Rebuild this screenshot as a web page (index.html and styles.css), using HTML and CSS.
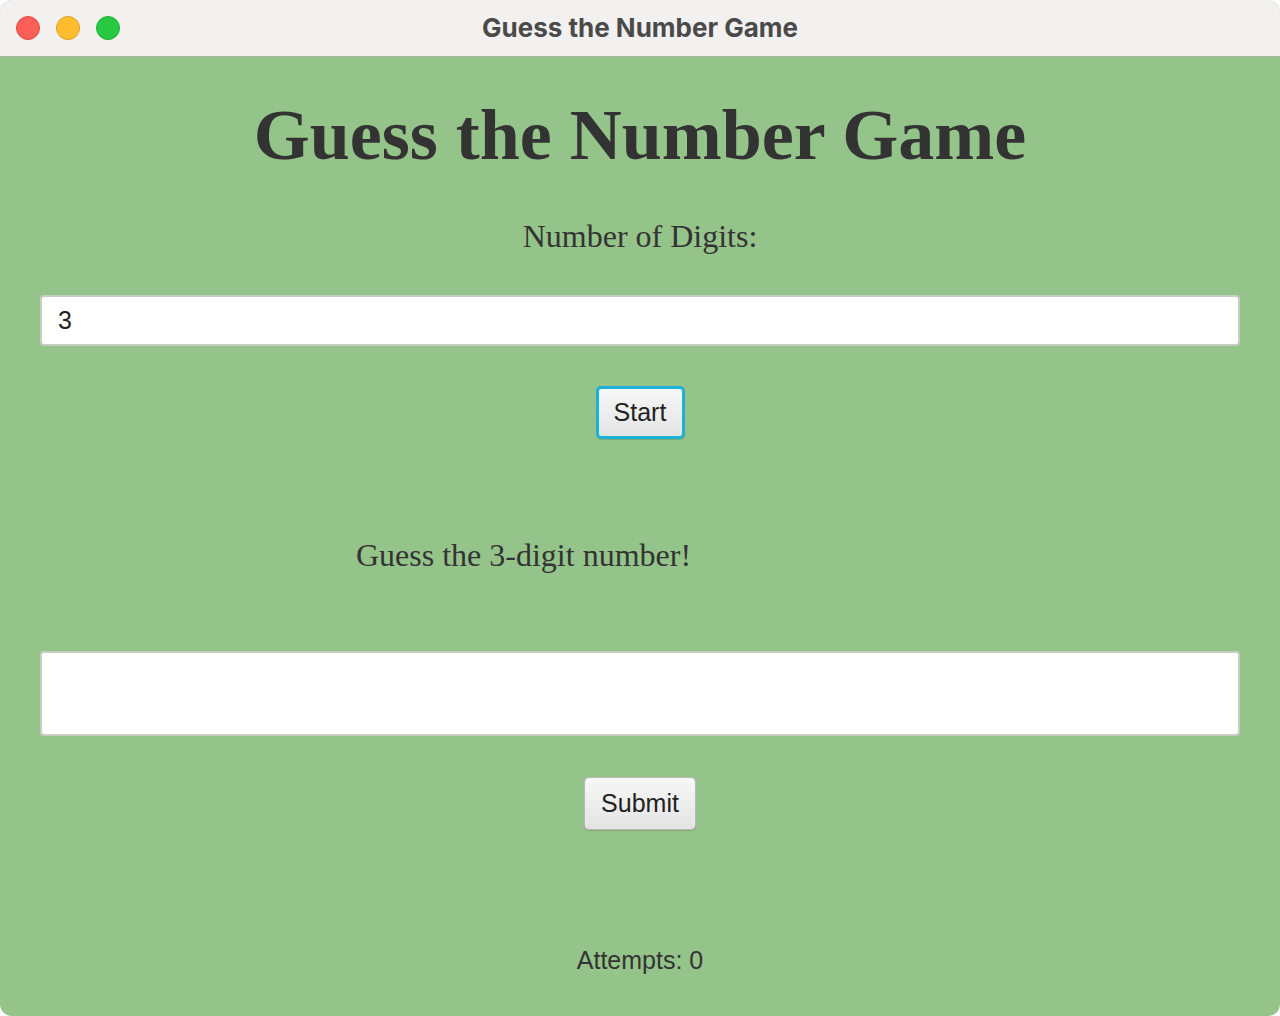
FILE: index.html
```html
<!DOCTYPE html>
<html>
<head>
<meta charset="utf-8">
<link rel="stylesheet" href="styles.css">
</head>
<body>
<div class="window">
  <div class="titlebar">
    <div class="lights">
      <span class="light red"></span>
      <span class="light yellow"></span>
      <span class="light green"></span>
    </div>
    <div class="wtitle">Guess the Number Game</div>
  </div>
  <div class="content">
    <h1 class="heading">Guess the Number Game</h1>
    <div class="label digits-label">Number of Digits:</div>
    <div class="field field-small">3</div>
    <div class="btn-row"><button class="btn btn-focus">Start</button></div>
    <div class="guess-row"><div class="label guess-label">Guess the 3-digit number!</div></div>
    <div class="field field-large"></div>
    <div class="btn-row submit-row"><button class="btn">Submit</button></div>
    <div class="attempts">Attempts: 0</div>
  </div>
</div>
</body>
</html>
```

FILE: styles.css
```css
html, body {
  margin: 0;
  padding: 0;
  background: #ffffff;
}
.window {
  width: 1280px;
  height: 1016px;
  border-radius: 12px;
  overflow: hidden;
  background: #95c48a;
  display: flex;
  flex-direction: column;
}
.titlebar {
  height: 57px;
  background: #f2f1f0;
  border-bottom: 1px solid #a9b8a2;
  display: flex;
  align-items: center;
  position: relative;
  box-sizing: border-box;
  flex: none;
}
.lights {
  display: flex;
  gap: 16px;
  padding-left: 16px;
}
.light {
  width: 24px;
  height: 24px;
  border-radius: 50%;
  box-sizing: border-box;
}
.red { background: #fe5f57; border: 1px solid #e5473f; }
.yellow { background: #febc2e; border: 1px solid #e0a024; }
.green { background: #28c840; border: 1px solid #1fae33; }
.wtitle {
  position: absolute;
  left: 0;
  right: 0;
  top: 0;
  bottom: 2px;
  display: flex;
  align-items: center;
  justify-content: center;
  font-family: "Inter", "Liberation Sans", sans-serif;
  font-weight: 700;
  font-size: 26px;
  color: #4a4a4a;
  pointer-events: none;
}
.content {
  flex: 1;
  display: flex;
  flex-direction: column;
  padding: 0 40px;
}
.heading {
  margin: 38px 0 0;
  text-align: center;
  font-family: "Liberation Serif", serif;
  font-weight: 700;
  font-size: 72px;
  line-height: 80px;
  color: #333333;
}
.label {
  font-family: "Liberation Serif", serif;
  font-size: 32px;
  color: #333333;
  line-height: 40px;
}
.digits-label {
  text-align: center;
  margin-top: 41px;
}
.field {
  background: #ffffff;
  border: 2px solid #c8cdc4;
  border-radius: 4px;
  box-sizing: border-box;
  font-family: "Liberation Sans", sans-serif;
  font-size: 25px;
  color: #222;
  padding-left: 16px;
  display: flex;
  align-items: center;
}
.field-small {
  height: 51px;
  margin-top: 39px;
}
.field-large {
  height: 85px;
  margin-top: 76px;
}
.btn-row {
  display: flex;
  justify-content: center;
  margin-top: 40px;
}
.btn {
  font-family: "Liberation Sans", sans-serif;
  font-size: 25px;
  color: #222;
  background: linear-gradient(#f7f7f7, #e4e4e4);
  border: 1px solid #b8b8b8;
  border-radius: 5px;
  height: 53px;
  padding: 0 14px;
  box-sizing: border-box;
  box-shadow: 0 1px 1px rgba(0,0,0,0.15);
}
.btn-focus {
  border: 3px solid #1cb1d6;
  padding: 0 12px;
  width: 89px;
}
.submit-row {
  margin-top: 41px;
}
.submit-row .btn {
  width: 112px;
}
.guess-row {
  margin-top: 96px;
  padding-left: 316px;
}
.attempts {
  margin-top: 112px;
  text-align: center;
  font-family: "Liberation Sans", sans-serif;
  font-size: 25px;
  color: #333;
  line-height: 36px;
}
```
